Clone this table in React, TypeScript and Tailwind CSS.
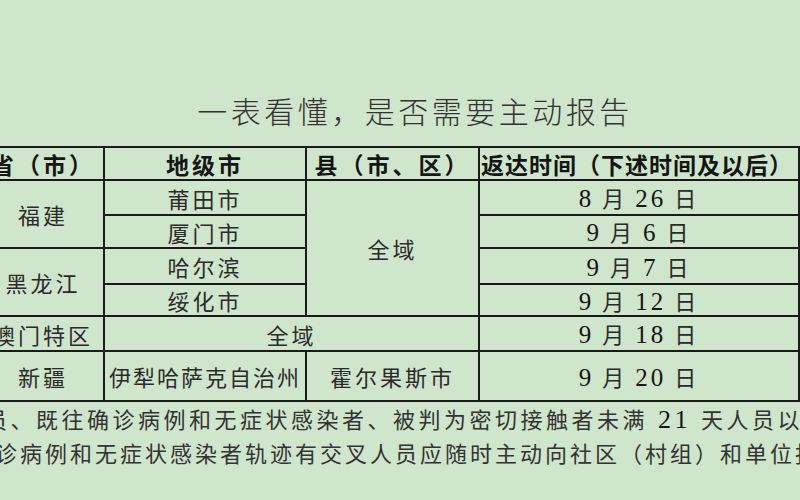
import React from "react";

const cjk = { fontFamily: '"Noto Sans CJK SC", "Noto Sans", sans-serif' };
const num = { fontFamily: '"Liberation Serif", "Noto Sans CJK SC", serif' };

const cell = "border-2 border-[#1a1a1a] p-0 text-center align-middle";

const DateText = ({ m, d }: { m: string; d: string }) => (
  <span className="text-[25px] text-[#151515]">
    <span style={num}>{m}</span>
    <span style={cjk} className="mx-[8px] text-[22px] text-[#2a2a2a]">月</span>
    <span style={num}>{d}</span>
    <span style={cjk} className="ml-[8px] text-[22px] text-[#2a2a2a]">日</span>
  </span>
);

export default function App() {
  return (
    <div className="w-[800px] h-[500px] overflow-hidden bg-[#cfe5cc] text-[#2b2b2b]" style={cjk}>
      <div className="pt-[90px] pl-[30px] text-center text-[30px] leading-[40px] tracking-[3.5px] font-light text-[#333]">
        一表看懂，是否需要主动报告
      </div>

      <table className="mt-[16px] ml-[-19px] w-[817px] border-collapse table-fixed text-[22px] leading-[22px] tracking-[3px]">
        <colgroup>
          <col className="w-[122px]" />
          <col className="w-[202px]" />
          <col className="w-[173px]" />
          <col className="w-[320px]" />
        </colgroup>
        <tbody>
          <tr className="h-[33px] font-semibold text-[#151515] text-[23px]">
            <td className={cell + " whitespace-nowrap"}>省（市）</td>
            <td className={cell}>地级市</td>
            <td className={cell + " whitespace-nowrap"}>县（市、区）</td>
            <td className={cell + " text-left pl-[1px] whitespace-nowrap overflow-hidden tracking-[1px]"}>返达时间（下述时间及以后）</td>
          </tr>
          <tr className="h-[35px]">
            <td className={cell} rowSpan={2}>福建</td>
            <td className={cell}>莆田市</td>
            <td className={cell} rowSpan={4}>全域</td>
            <td className={cell}><DateText m="8" d="26" /></td>
          </tr>
          <tr className="h-[33px]">
            <td className={cell}>厦门市</td>
            <td className={cell}><DateText m="9" d="6" /></td>
          </tr>
          <tr className="h-[36px]">
            <td className={cell} rowSpan={2}>黑龙江</td>
            <td className={cell}>哈尔滨</td>
            <td className={cell}><DateText m="9" d="7" /></td>
          </tr>
          <tr className="h-[32px]">
            <td className={cell}>绥化市</td>
            <td className={cell}><DateText m="9" d="12" /></td>
          </tr>
          <tr className="h-[35px]">
            <td className={cell + " whitespace-nowrap"}>澳门特区</td>
            <td className={cell} colSpan={2}>全域</td>
            <td className={cell}><DateText m="9" d="18" /></td>
          </tr>
          <tr className="h-[50px]">
            <td className={cell}>新疆</td>
            <td className={cell + " whitespace-nowrap tracking-[2px]"}>伊犁哈萨克自治州</td>
            <td className={cell}>霍尔果斯市</td>
            <td className={cell}><DateText m="9" d="20" /></td>
          </tr>
        </tbody>
      </table>

      <div className="text-[22px] leading-[33px] whitespace-nowrap text-[#333]">
        <div className="ml-[-15px] tracking-[3.5px]">
          员、既往确诊病例和无症状感染者、被判为密切接触者未满
          <span style={num} className="text-[26px] text-[#151515]"> 21 </span>
          天人员以上
        </div>
        <div className="ml-[-5px] tracking-[3px]">诊病例和无症状感染者轨迹有交叉人员应随时主动向社区（村组）和单位报告</div>
      </div>
    </div>
  );
}
